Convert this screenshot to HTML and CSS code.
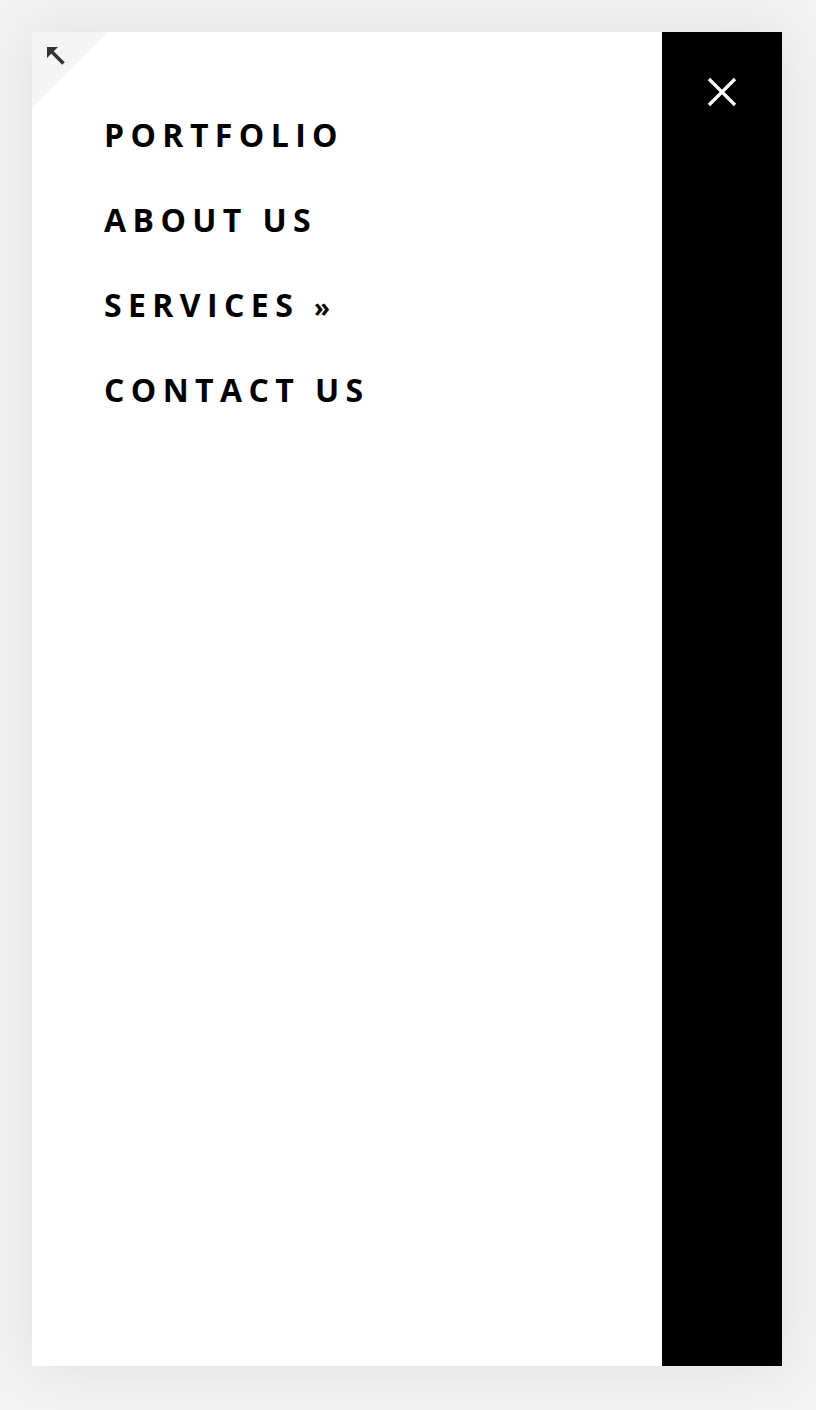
FILE: index.html
```html
<!DOCTYPE html>
<html>
<head>
<meta charset="utf-8">
<link rel="stylesheet" href="styles.css">
</head>
<body>
<div class="panel">
  <div class="menu">
    <div class="corner">
      <svg class="arrow" width="18" height="18" viewBox="0 0 18 18">
        <path d="M0 0 H11 L0 11 Z" fill="#333"/>
        <path d="M3 3 L16.5 16.5" stroke="#333" stroke-width="3.6"/>
      </svg>
    </div>
    <nav class="links">
      <a class="link" href="#">PORTFOLIO</a>
      <a class="link" href="#">ABOUT US</a>
      <a class="link" href="#">SERVICES <span class="raquo">»</span></a>
      <a class="link" href="#">CONTACT US</a>
    </nav>
  </div>
  <div class="side">
    <svg class="close" width="32" height="32" viewBox="0 0 32 32">
      <path d="M3 3 L29 29 M29 3 L3 29" stroke="#fff" stroke-width="3.2" stroke-linecap="butt"/>
    </svg>
  </div>
</div>
</body>
</html>
```
FILE: styles.css
```css
html, body {
  margin: 0;
  padding: 0;
}
body {
  background: #f3f3f3;
  width: 816px;
  height: 1410px;
  padding: 32px 34px 44px 32px;
  box-sizing: border-box;
  font-family: "Open Sans", sans-serif;
}
.panel {
  display: flex;
  height: 1334px;
  width: 750px;
  box-shadow: 0 0 50px rgba(0, 0, 0, 0.09);
}
.menu {
  position: relative;
  flex: 1;
  background: #fff;
}
.corner {
  position: absolute;
  left: 0;
  top: 0;
  width: 76px;
  height: 76px;
  background: linear-gradient(135deg, #f4f4f4 50%, transparent 50%);
}
.arrow {
  position: absolute;
  left: 15px;
  top: 15px;
}
.links {
  display: flex;
  flex-direction: column;
  padding: 81px 0 0 72px;
  gap: 41px;
}
.link {
  display: block;
  height: 44px;
  color: #000;
  text-decoration: none;
  font-weight: 700;
  font-size: 32px;
  line-height: 44px;
  letter-spacing: 6.4px;
}
.raquo {
  font-size: 26px;
  line-height: 1;
  letter-spacing: 0;
}
.side {
  width: 120px;
  background: #000;
  display: flex;
  justify-content: center;
  align-items: flex-start;
  padding-top: 44px;
  box-sizing: border-box;
}
.close {
  display: block;
}
```
